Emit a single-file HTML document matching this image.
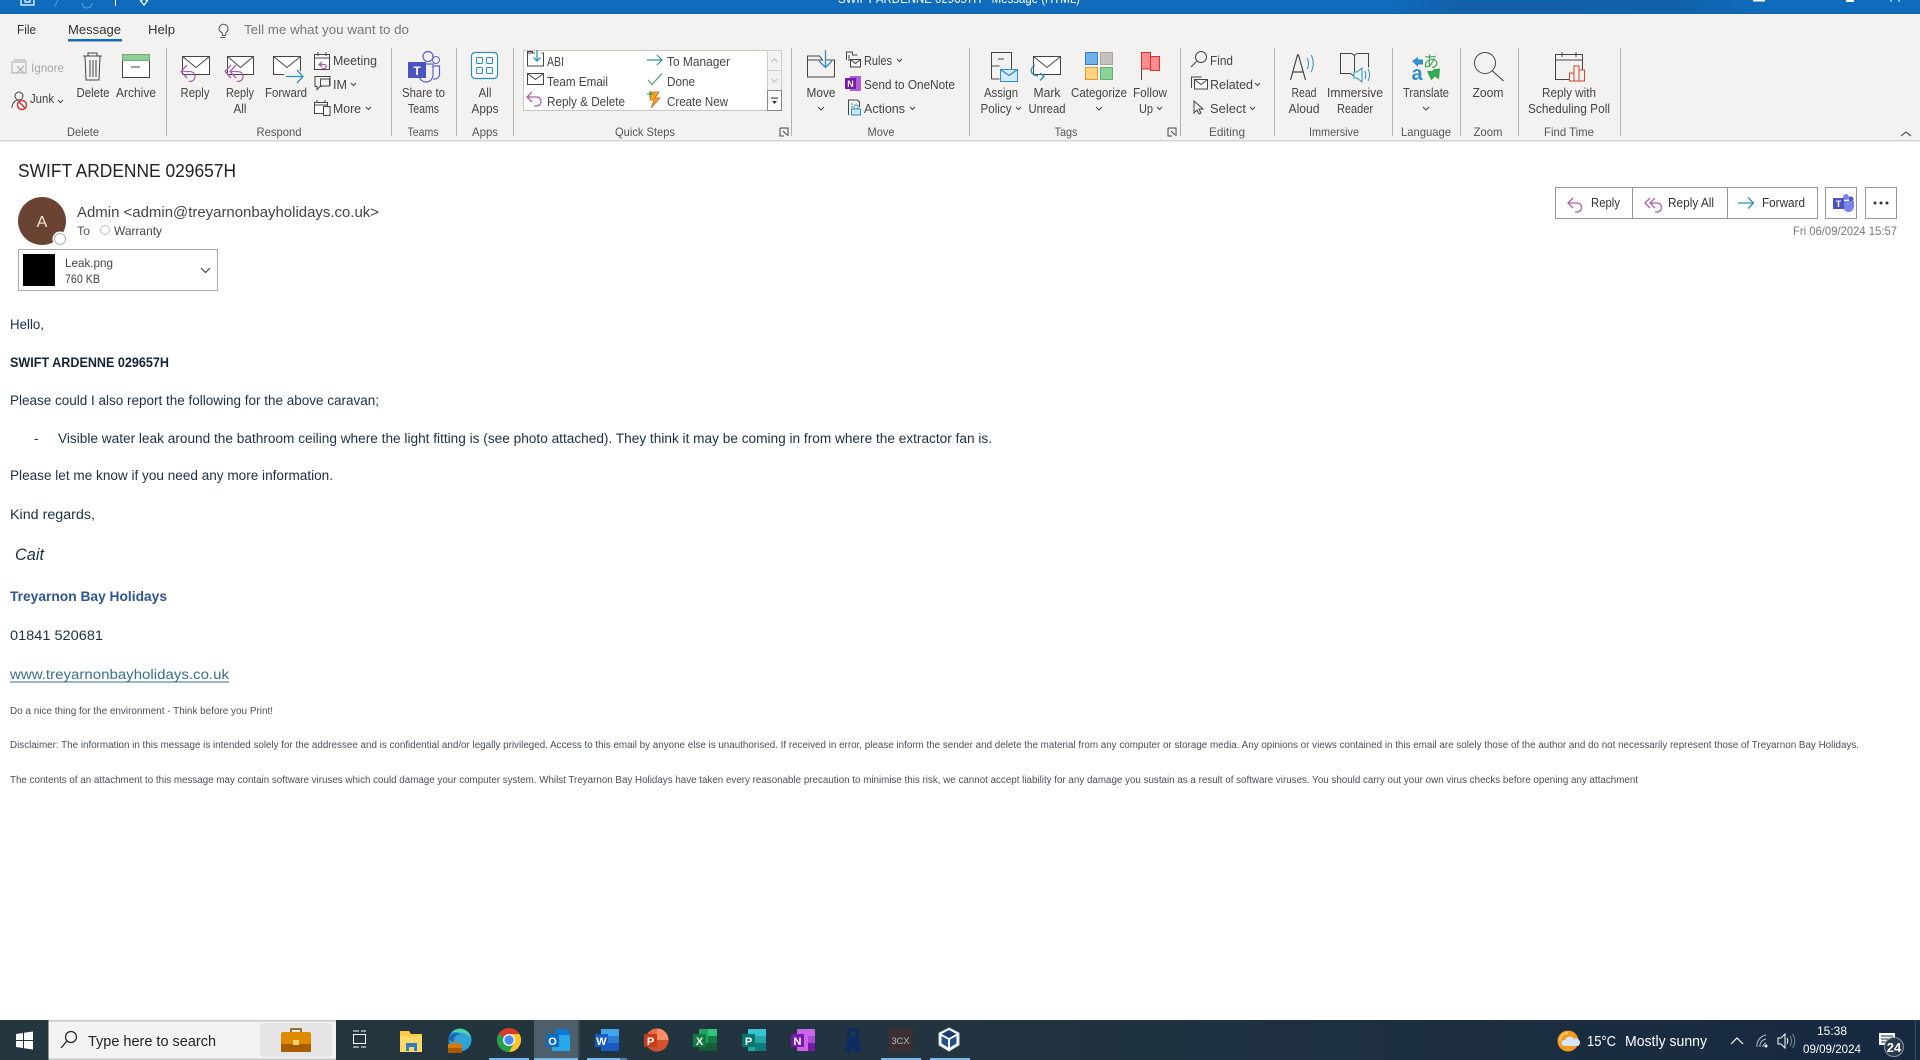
<!DOCTYPE html>
<html><head><meta charset="utf-8"><title>SWIFT ARDENNE 029657H - Message (HTML)</title>
<style>
html,body{margin:0;padding:0;background:#fff;width:1920px;height:1060px;overflow:hidden}
svg{display:block;position:absolute;left:0;top:0}
text{font-family:"Liberation Sans","Noto Sans CJK JP",sans-serif}
.r{font-size:12.5px;fill:#444}
.m{font-size:12.5px;fill:#444;text-anchor:middle}
.g{font-size:12px;fill:#555;text-anchor:middle}
.b{font-size:13.5px;fill:#1c3044}
.s{font-size:10px;fill:#4a4f55}
.i{fill:none;stroke:#444;stroke-width:1}
.w{fill:#fff;stroke:#444;stroke-width:1}
.p{fill:none;stroke:#ad5fad;stroke-width:1.3}
.u{fill:none;stroke:#2f8fc0;stroke-width:1.3}
.ch{fill:none;stroke:#444;stroke-width:1}
.t{font-size:13px;fill:#333}
</style></head><body>
<svg width="1920" height="1060" viewBox="0 0 1920 1060" xmlns="http://www.w3.org/2000/svg">
<defs>
<linearGradient id="tb" x1="0" x2="1"><stop offset="0" stop-color="#24363f"/><stop offset=".5" stop-color="#21343f"/><stop offset="1" stop-color="#172941"/></linearGradient>
<linearGradient id="tl" x1="0" x2="1"><stop offset="0" stop-color="#0f6cbd"/><stop offset=".72" stop-color="#0f6cbd"/><stop offset=".76" stop-color="#1261a8"/><stop offset=".87" stop-color="#1161a8"/><stop offset=".92" stop-color="#0f6cbd"/></linearGradient>
</defs>
<!-- title bar -->
<rect width="1920" height="14" fill="url(#tl)"/>
<rect y="12.5" width="1920" height="1.5" fill="#1062a9"/>
<path d="M21 0v5h13V0M25 0v2h5V0" fill="none" stroke="#fff" stroke-width="1.2"/>
<path d="M58 0l-3 6" stroke="#5d9fd6" fill="none"/><path d="M82 3a5 5 0 0 0 10 0" stroke="#5d9fd6" fill="none"/>
<path d="M115.500 0v6" stroke="#fff"/>
<path d="M140 0l4 5 4-5M142 0v1M146 0v1" fill="none" stroke="#fff" stroke-width="1.2"/>
<text x="838" y="3" font-size="12.5" fill="#fff" textLength="242" lengthAdjust="spacingAndGlyphs">SWIFT ARDENNE 029657H  -  Message (HTML)</text>
<rect x="1753" y="0" width="12" height="1.500" fill="#fff"/><rect x="1846" y="0" width="8" height="2" fill="#fff"/><path d="M1891 0v2M1899 0v2" stroke="#fff"/>
<!-- ribbon -->
<rect y="14" width="1920" height="126" fill="#f3f2f1"/>
<rect y="140" width="1920" height="1" fill="#d4d3d2"/><rect y="141" width="1920" height="1" fill="#ecebea"/>
<text x="17" y="34" class="t" textLength="19" lengthAdjust="spacingAndGlyphs">File</text>
<text x="68" y="34" class="t" textLength="53" lengthAdjust="spacingAndGlyphs">Message</text>
<rect x="68" y="39" width="54" height="2.500" fill="#106ebe"/>
<text x="148" y="34" class="t" textLength="27" lengthAdjust="spacingAndGlyphs">Help</text>
<path d="M219 29a4.500 4.500 0 1 1 7 3.500l-.5 3h-3l-.5-3a4.500 4.500 0 0 1-3-3.500zM220.500 37.500h5" fill="none" stroke="#555"/>
<text x="244" y="34" font-size="13" fill="#777" textLength="165" lengthAdjust="spacingAndGlyphs">Tell me what you want to do</text>
<!-- separators -->
<path d="M166.500 48v88M391.500 48v88M456.500 48v88M513.500 48v88M791.500 48v88M969.500 48v88M1180.500 48v88M1274.500 48v88M1392.500 48v88M1460.500 48v88M1518.500 48v88M1620.500 48v88" stroke="#b5b3b1" stroke-width="1"/>
<!-- group labels -->
<text x="83" y="136" class="g" textLength="32" lengthAdjust="spacingAndGlyphs">Delete</text><text x="279" y="136" class="g" textLength="45" lengthAdjust="spacingAndGlyphs">Respond</text><text x="423" y="136" class="g" textLength="31" lengthAdjust="spacingAndGlyphs">Teams</text><text x="485" y="136" class="g" textLength="26" lengthAdjust="spacingAndGlyphs">Apps</text><text x="645" y="136" class="g" textLength="60" lengthAdjust="spacingAndGlyphs">Quick Steps</text><text x="881" y="136" class="g" textLength="27" lengthAdjust="spacingAndGlyphs">Move</text><text x="1066" y="136" class="g" textLength="23" lengthAdjust="spacingAndGlyphs">Tags</text><text x="1227" y="136" class="g" textLength="36" lengthAdjust="spacingAndGlyphs">Editing</text><text x="1334" y="136" class="g" textLength="50" lengthAdjust="spacingAndGlyphs">Immersive</text><text x="1426" y="136" class="g" textLength="50" lengthAdjust="spacingAndGlyphs">Language</text><text x="1488" y="136" class="g" textLength="29" lengthAdjust="spacingAndGlyphs">Zoom</text><text x="1569" y="136" class="g" textLength="50" lengthAdjust="spacingAndGlyphs">Find Time</text>
<path d="M780 128h8v8M780 128v8h4M783 131l4 4" class="ch" stroke-width=".8"/><path d="M1168 128h8v8M1168 128v8h4M1171 131l4 4" class="ch"/>
<path d="M1901 136l5-4 5 4" fill="none" stroke="#555" stroke-width="1.200"/>
<!-- Delete group -->
<g stroke="#aaa" fill="none"><rect x="12" y="62" width="14" height="11"/><path d="M14 60h12M17 66l7 7M24 66l-7 7"/></g>
<text x="31" y="72" font-size="12" fill="#a8a8a8" textLength="33" lengthAdjust="spacingAndGlyphs">Ignore</text>
<circle cx="19" cy="96" r="4" class="i"/><path d="M12 108c0-5 3-8 7-8" class="i"/><circle cx="22" cy="105" r="4.500" fill="#fff" stroke="#d13438" stroke-width="1.500"/><path d="M19 102l6 6" stroke="#d13438" stroke-width="1.500"/>
<text x="30" y="103" class="r" textLength="24" lengthAdjust="spacingAndGlyphs">Junk</text><path d="M58 100l2.500 2.500 2.500-2.500" class="ch"/>
<path d="M83 56h19M88 56v-3h9v3M85 56l1 24h13l1-24M90 60v17M93 60v17M96 60v17" class="i"/>
<text x="93" y="97" class="m" textLength="33" lengthAdjust="spacingAndGlyphs">Delete</text>
<rect x="122.500" y="54.500" width="27" height="23" class="w"/><rect x="122.500" y="54.500" width="27" height="6" fill="#8fcc98" stroke="#6fae7a"/><path d="M131 67h9" stroke="#444"/>
<text x="136" y="97" class="m" textLength="40" lengthAdjust="spacingAndGlyphs">Archive</text>
<!-- Respond -->
<g><rect x="182.500" y="56.500" width="27" height="18" class="w"/><path d="M182.500 56.500l13.500 11 13.500-11" class="i"/><path d="M187 65l-6 6.500 6 6.500M181 71.500h8c4 0 6 2 6 5s-2 5-6 5" class="p"/></g>
<text x="195" y="97" class="m" textLength="29" lengthAdjust="spacingAndGlyphs">Reply</text>
<g><rect x="227.500" y="56.500" width="26" height="18" class="w"/><path d="M227.500 56.500l13 11 13-11" class="i"/><path d="M231 65l-6 6.500 6 6.500M236 65l-6 6.500 6 6.500M231 71.500h6c4 0 6 2 6 5s-2 5-6 5" class="p"/></g>
<text x="240" y="97" class="m" textLength="28" lengthAdjust="spacingAndGlyphs">Reply</text><text x="240" y="113" class="m" textLength="13" lengthAdjust="spacingAndGlyphs">All</text>
<g><rect x="273.500" y="56.500" width="27" height="18" class="w"/><path d="M273.500 56.500l13.500 11 13.500-11" class="i"/><rect x="284" y="71" width="20" height="11" fill="#f3f2f1"/><path d="M286 76.500h17M297 70l6 6.500-6 6.500" class="u"/></g>
<text x="286" y="97" class="m" textLength="42" lengthAdjust="spacingAndGlyphs">Forward</text>
<g><rect x="314.500" y="54.500" width="15" height="15" class="w"/><path d="M314.500 58h15M318 52v4M326 52v4" class="i"/><path d="M322 62l-3 2.500 3 2.500M319 64.500h5c3 0 3 4 0 4h-2" class="p" fill="none"/></g>
<text x="333" y="65" class="r" textLength="44" lengthAdjust="spacingAndGlyphs">Meeting</text>
<g><path d="M319 76.500h11v9h-3M319 76.500h-4v10h2v3l3-3h2" class="i"/><rect x="320.500" y="79" width="9" height="7" fill="#f3f2f1" stroke="#444"/></g>
<text x="333" y="89" class="r" textLength="14" lengthAdjust="spacingAndGlyphs">IM</text><path d="M351 83l2.500 2.500 2.500-2.500" class="ch"/>
<g><rect x="314.500" y="102.500" width="13" height="11" class="w"/><path d="M314.500 105h13M317 100v3M325 100v3" class="i"/><rect x="323.500" y="106.500" width="6.500" height="9" class="w"/></g>
<text x="333" y="113" class="r" textLength="28" lengthAdjust="spacingAndGlyphs">More</text><path d="M366 107l2.500 2.500 2.500-2.500" class="ch"/>
<!-- Teams -->
<circle cx="428" cy="56.500" r="5" fill="#f3f2f1" stroke="#5b62c4" stroke-width="1.200"/><circle cx="436" cy="60" r="3.500" fill="#f3f2f1" stroke="#5b62c4"/>
<path d="M433 66h6.500v8a5 5 0 0 1-6 5" fill="#f3f2f1" stroke="#5b62c4" stroke-width="1.200"/><path d="M419 64h14v11a7 7 0 0 1-14 0z" fill="#f3f2f1" stroke="#5b62c4" stroke-width="1.200"/>
<rect x="408" y="62" width="18" height="16" fill="#4b53bc"/><text x="417" y="75" font-size="12" font-weight="bold" fill="#fff" text-anchor="middle">T</text>
<text x="423.500" y="97" class="m" textLength="43" lengthAdjust="spacingAndGlyphs">Share to</text><text x="423.500" y="113" class="m" textLength="31" lengthAdjust="spacingAndGlyphs">Teams</text>
<!-- Apps -->
<rect x="471.500" y="52.500" width="26" height="26" rx="3.500" fill="#fff" stroke="#2a8dc5" stroke-width="1.200"/>
<g fill="#f3f2f1" stroke="#2a8dc5"><rect x="476.500" y="57.500" width="6" height="6" rx="1"/><rect x="486.500" y="57.500" width="6" height="6" rx="1"/><rect x="476.500" y="67.500" width="6" height="6" rx="1"/><rect x="486.500" y="67.500" width="6" height="6" rx="1"/></g>
<text x="485" y="97" class="m" textLength="13" lengthAdjust="spacingAndGlyphs">All</text><text x="485" y="113" class="m" textLength="27" lengthAdjust="spacingAndGlyphs">Apps</text>
<!-- Quick steps -->
<rect x="523.500" y="50.500" width="244" height="60" fill="#fff" stroke="#c8c6c4"/>
<rect x="767.500" y="50.500" width="14" height="20" fill="#f3f2f1" stroke="#d0cecc"/><rect x="767.500" y="70.500" width="14" height="20" fill="#f3f2f1" stroke="#d0cecc"/><rect x="767.500" y="90.500" width="14" height="20" fill="#fafafa" stroke="#888"/>
<path d="M771.500 62l3-3 3 3M771.500 79l3 3 3-3" fill="none" stroke="#bbb"/><path d="M771 98h7" stroke="#333"/><path d="M772 101h5l-2.500 3z" fill="#333"/>
<path d="M535 53h-7.500v13h16V53h-2M527.500 53v-1.500h5v1.500" class="i"/><path d="M537 50v11M533.500 57.500l3.500 3.500 3.500-3.500" class="u"/>
<text x="547" y="66" class="r" textLength="17" lengthAdjust="spacingAndGlyphs">ABI</text>
<rect x="527.500" y="73.500" width="16" height="11" class="w"/><path d="M527.500 73.500l8 6 8-6" class="i"/>
<text x="547" y="86" class="r" textLength="61" lengthAdjust="spacingAndGlyphs">Team Email</text>
<path d="M532 92l-5 5 5 5M527 97h10c5 0 6 9-1 9h-2" class="p"/>
<text x="547" y="106" class="r" textLength="78" lengthAdjust="spacingAndGlyphs">Reply &amp; Delete</text>
<path d="M647 60h15M657 55l5 5-5 5" fill="none" stroke="#2f8fa0" stroke-width="1.200"/>
<text x="667" y="66" class="r" textLength="63" lengthAdjust="spacingAndGlyphs">To Manager</text>
<path d="M648 80l4 4.500 10-11" fill="none" stroke="#4a9c6a" stroke-width="1.200"/>
<text x="667" y="86" class="r" textLength="28" lengthAdjust="spacingAndGlyphs">Done</text>
<path d="M650 92h9l-4 6h5l-9 10 3-8h-4z" fill="#f5a623" stroke="#c8651b" stroke-width=".8"/><path d="M647 94h6M650 91v6" stroke="#2e8b3f"/>
<text x="667" y="106" class="r" textLength="61" lengthAdjust="spacingAndGlyphs">Create New</text>
<!-- Move -->
<path d="M807.500 60v17h27V60h-8M807.500 60v-4h12l3 4h-15z" class="i" fill="#fff"/><path d="M825.500 50v17M819 61l6.500 6.500L832 61" class="u"/>
<text x="821" y="97" class="m" textLength="29" lengthAdjust="spacingAndGlyphs">Move</text><path d="M818 107l3 3 3-3" class="ch"/>
<path d="M846.500 60v-8h6v3h5M849 55v6M850.500 59.500h10v7.500h-10zM850.500 59.500l5 4 5-4" class="i"/><text x="864" y="65" class="r" textLength="28" lengthAdjust="spacingAndGlyphs">Rules</text><path d="M897 59l2.500 2.500 2.500-2.500" class="ch"/>
<rect x="850" y="76" width="11" height="15" fill="#b05fd1"/><rect x="845" y="78" width="11" height="11" fill="#7719aa"/><text x="850.500" y="87" font-size="9" font-weight="bold" fill="#fff" text-anchor="middle">N</text>
<text x="864" y="89" class="r" textLength="91" lengthAdjust="spacingAndGlyphs">Send to OneNote</text>
<path d="M848.500 115v-15h9l2 2v5" class="i"/><path d="M851 104h2M851 107h2" stroke="#2f8fc0"/><rect x="851.500" y="109" width="9" height="6" fill="#cde4f5" stroke="#2f8fc0"/><circle cx="856" cy="107" r="2" fill="#fff" stroke="#2f8fc0"/>
<text x="864" y="113" class="r" textLength="41" lengthAdjust="spacingAndGlyphs">Actions</text><path d="M910 107l2.500 2.500 2.500-2.500" class="ch"/>
<!-- Tags -->
<path d="M991.500 79V52.500h20V69M991.500 66h8M991.500 79h8M998 59h6" class="i"/><rect x="1000.500" y="69.500" width="17" height="12" fill="#d4e9f7" stroke="#2f8fc0"/><path d="M1000.500 69.500l8.500 6 8.500-6" class="u" stroke-width="1"/>
<text x="1001" y="97" class="m" textLength="34" lengthAdjust="spacingAndGlyphs">Assign</text><text x="996" y="113" class="m" textLength="31" lengthAdjust="spacingAndGlyphs">Policy</text><path d="M1016 107l2.500 2.500 2.500-2.500" class="ch"/>
<rect x="1033.500" y="56.500" width="27" height="18" class="w"/><path d="M1033.500 56.500l13.500 11 13.500-11" class="i"/><path d="M1035 65c-6 4-5 10 3 11M1040 73l4 3.500-4 4" class="u" fill="#f3f2f1"/>
<text x="1047" y="97" class="m" textLength="27" lengthAdjust="spacingAndGlyphs">Mark</text><text x="1047" y="113" class="m" textLength="37" lengthAdjust="spacingAndGlyphs">Unread</text>
<rect x="1085.500" y="52.500" width="12" height="12" fill="#6fb1e8" stroke="#2b7cd3"/><rect x="1100.500" y="52.500" width="12" height="12" fill="#c4c1bd" stroke="#a8a5a1"/><rect x="1085.500" y="67.500" width="12" height="12" fill="#ffd37f" stroke="#e09a2c"/><rect x="1100.500" y="67.500" width="12" height="12" fill="#8bd29a" stroke="#5fae72"/>
<text x="1099" y="97" class="m" textLength="56" lengthAdjust="spacingAndGlyphs">Categorize</text><path d="M1096 107l3 3 3-3" class="ch"/>
<path d="M1141.500 52v28" stroke="#444"/><path d="M1141.500 52.500h9v4h9v14h-9v-1.500h-9z" fill="#ff8c8c" stroke="#d13438"/><path d="M1150.500 56.500v12.500" stroke="#d13438"/>
<text x="1150" y="97" class="m" textLength="34" lengthAdjust="spacingAndGlyphs">Follow</text><text x="1146" y="113" class="m" textLength="14" lengthAdjust="spacingAndGlyphs">Up</text><path d="M1157 107l2.500 2.500 2.500-2.500" class="ch"/>
<!-- Editing -->
<circle cx="1201" cy="57" r="5.500" class="i"/><path d="M1197 61l-6 6" stroke="#444"/>
<text x="1210" y="65" class="r" textLength="23" lengthAdjust="spacingAndGlyphs">Find</text>
<path d="M1191.500 88v-11h10" class="i"/><rect x="1194.500" y="79.500" width="13" height="9.500" class="w"/><path d="M1194.500 79.500l6.500 5 6.500-5" class="i"/>
<text x="1210" y="89" class="r" textLength="43" lengthAdjust="spacingAndGlyphs">Related</text><path d="M1255 83l2.500 2.500 2.500-2.500" class="ch"/>
<path d="M1194 101v12l3-3 2 4 2-1-2-4h4z" fill="#f3f2f1" stroke="#444"/>
<text x="1210" y="113" class="r" textLength="36" lengthAdjust="spacingAndGlyphs">Select</text><path d="M1250 107l2.500 2.500 2.500-2.500" class="ch"/>
<!-- Immersive -->
<path d="M1290.500 80l7-25h1l7 25M1293 72h10" fill="none" stroke="#444" stroke-width="1.200"/><path d="M1307 58c2 3 2 8 0 11M1311 55c3 5 3 12 0 17" fill="none" stroke="#2f8fc0"/>
<text x="1304" y="97" class="m" textLength="25" lengthAdjust="spacingAndGlyphs">Read</text><text x="1304" y="113" class="m" textLength="31" lengthAdjust="spacingAndGlyphs">Aloud</text>
<path d="M1340.500 53.500h10c3 0 4 2 4 3v20l-4-3h-10zM1354.500 56.500c0-2 2-3 4-3h10v14" class="i" fill="#f3f2f1"/>
<path d="M1354 72h3l5-4v14l-5-4h-3z" fill="#e6f1f8" stroke="#2f8fc0"/><path d="M1365 71c1 2 1 6 0 8M1368 69c2 3 2 9 0 12" fill="none" stroke="#2f8fc0"/>
<text x="1355" y="97" class="m" textLength="56" lengthAdjust="spacingAndGlyphs">Immersive</text><text x="1355" y="113" class="m" textLength="36" lengthAdjust="spacingAndGlyphs">Reader</text>
<!-- Translate -->
<text x="1431" y="67" font-size="16" fill="#3ea55a" text-anchor="middle">あ</text>
<text x="1417" y="80" font-size="20" font-weight="bold" fill="#2d8fd0" text-anchor="middle">a</text>
<path d="M1412 61l6-4v2.500h5v5h-5V67z" fill="#2d8fd0"/><path d="M1427 71h5l3-2.500V69l5-.5-1 11-4-3-3 3-1 .5z" fill="#34a853"/>
<text x="1426" y="97" class="m" textLength="46" lengthAdjust="spacingAndGlyphs">Translate</text><path d="M1423 107l3 3 3-3" class="ch"/>
<!-- Zoom -->
<circle cx="1485" cy="63" r="10.500" class="i" stroke-width="1.100"/><path d="M1492.500 71l11 10" stroke="#444" stroke-width="1.100"/>
<text x="1488" y="97" class="m" textLength="31" lengthAdjust="spacingAndGlyphs">Zoom</text>
<!-- Poll -->
<path d="M1555.500 54.500h27v25h-27zM1555.500 60h27M1562 52v5M1576 52v5" class="i" fill="#fff"/><path d="M1569.500 81v-8h4.500v-7h5v4h5.500v11zM1574 81v-8M1579 81V70" fill="#f3f2f1" stroke="#d24726"/>
<text x="1569" y="97" class="m" textLength="54" lengthAdjust="spacingAndGlyphs">Reply with</text><text x="1569" y="113" class="m" textLength="82" lengthAdjust="spacingAndGlyphs">Scheduling Poll</text>
<!-- message header -->
<text x="18" y="177" font-size="18" fill="#222" textLength="218" lengthAdjust="spacingAndGlyphs">SWIFT ARDENNE 029657H</text>
<circle cx="42" cy="221" r="24" fill="#6b4332"/><text x="42" y="227" font-size="16" fill="#f2e6df" text-anchor="middle">A</text>
<circle cx="60" cy="239" r="7.500" fill="#fff"/><circle cx="60" cy="239" r="5.500" fill="#fff" stroke="#a9b4be"/>
<text x="77" y="217" font-size="15" fill="#444" textLength="302" lengthAdjust="spacingAndGlyphs">Admin &lt;admin@treyarnonbayholidays.co.uk&gt;</text>
<text x="77" y="235" font-size="12" fill="#555" textLength="13" lengthAdjust="spacingAndGlyphs">To</text>
<circle cx="105" cy="230" r="4.500" fill="#fff" stroke="#b4c0cc"/>
<text x="114" y="235" font-size="12" fill="#444" textLength="48" lengthAdjust="spacingAndGlyphs">Warranty</text>
<rect x="18.500" y="249.500" width="199" height="41" fill="#fff" stroke="#aaa"/><rect x="23" y="254" width="32" height="32" fill="#000"/>
<text x="65" y="267" font-size="12" fill="#444" textLength="48" lengthAdjust="spacingAndGlyphs">Leak.png</text><text x="65" y="283" font-size="12" fill="#444" textLength="35" lengthAdjust="spacingAndGlyphs">760 KB</text>
<path d="M201 268l4.500 4.500 4.500-4.500" fill="none" stroke="#444" stroke-width="1.200"/>
<!-- actions -->
<g fill="#fff" stroke="#969696"><rect x="1555.500" y="187.500" width="262" height="31"/><rect x="1825.500" y="187.500" width="31" height="31"/><rect x="1865.500" y="187.500" width="31" height="31"/></g><path d="M1632.500 187v31M1727.500 187v31" stroke="#969696"/>
<path d="M1573 198l-5 5 5 5M1568 203h9c6 0 6 9 0 9h-2" class="p"/>
<path d="M1650 198l-5 5 5 5M1655 198l-5 5 5 5M1650 203h7c6 0 6 9 0 9h-2" class="p"/>
<path d="M1738 203h15M1748 197.500l5.500 5.500-5.500 5.500" class="u"/>
<text x="1591" y="207" class="t" textLength="29" lengthAdjust="spacingAndGlyphs">Reply</text><text x="1668" y="207" class="t" textLength="46" lengthAdjust="spacingAndGlyphs">Reply All</text><text x="1762" y="207" class="t" textLength="43" lengthAdjust="spacingAndGlyphs">Forward</text>
<circle cx="1846" cy="197" r="3" fill="#7b83eb"/><circle cx="1851" cy="199" r="2.500" fill="#5059c9"/><path d="M1843 201h11v5a5 5 0 0 1-11 1z" fill="#7b83eb"/><rect x="1833" y="198" width="11" height="11" fill="#4b53bc"/><text x="1838.500" y="207" font-size="9" font-weight="bold" fill="#fff" text-anchor="middle">T</text>
<g fill="#333"><circle cx="1875" cy="203" r="1.500"/><circle cx="1881" cy="203" r="1.500"/><circle cx="1887" cy="203" r="1.500"/></g>
<text x="1793" y="235" font-size="12" fill="#777" textLength="104" lengthAdjust="spacingAndGlyphs">Fri 06/09/2024 15:57</text>
<!-- body -->
<text x="10" y="329" class="b" textLength="34" lengthAdjust="spacingAndGlyphs">Hello,</text>
<text x="10" y="367" class="b" font-weight="bold" textLength="159" lengthAdjust="spacingAndGlyphs" style="fill:#132435">SWIFT ARDENNE 029657H</text>
<text x="10" y="405" class="b" textLength="369" lengthAdjust="spacingAndGlyphs">Please could I also report the following for the above caravan;</text>
<text x="34" y="443" class="b">-</text>
<text x="58" y="443" class="b" textLength="934" lengthAdjust="spacingAndGlyphs">Visible water leak around the bathroom ceiling where the light fitting is (see photo attached). They think it may be coming in from where the extractor fan is.</text>
<text x="10" y="480" class="b" textLength="323" lengthAdjust="spacingAndGlyphs">Please let me know if you need any more information.</text>
<text x="10" y="519" class="b" textLength="85" lengthAdjust="spacingAndGlyphs">Kind regards,</text>
<text x="15" y="560" font-size="17" font-style="italic" fill="#1c3044" textLength="29" lengthAdjust="spacingAndGlyphs">Cait</text>
<text x="10" y="601" class="b" font-weight="bold" textLength="157" lengthAdjust="spacingAndGlyphs" style="fill:#2f5496">Treyarnon Bay Holidays</text>
<text x="10" y="640" class="b" textLength="93" lengthAdjust="spacingAndGlyphs">01841 520681</text>
<text x="10" y="679" class="b" textLength="219" lengthAdjust="spacingAndGlyphs" style="fill:#3a6f8a">www.treyarnonbayholidays.co.uk</text><rect x="10" y="681.500" width="219" height="1" fill="#3a6f8a"/>
<text x="10" y="714" class="s" textLength="263" lengthAdjust="spacingAndGlyphs">Do a nice thing for the environment - Think before you Print!</text>
<text x="10" y="748" class="s" textLength="1849" lengthAdjust="spacingAndGlyphs">Disclaimer: The information in this message is intended solely for the addressee and is confidential and/or legally privileged. Access to this email by anyone else is unauthorised. If received in error, please inform the sender and delete the material from any computer or storage media. Any opinions or views contained in this email are solely those of the author and do not necessarily represent those of Treyarnon Bay Holidays.</text>
<text x="10" y="783" class="s" textLength="1628" lengthAdjust="spacingAndGlyphs">The contents of an attachment to this message may contain software viruses which could damage your computer system. Whilst Treyarnon Bay Holidays have taken every reasonable precaution to minimise this risk, we cannot accept liability for any damage you sustain as a result of software viruses. You should carry out your own virus checks before opening any attachment</text>
<!-- taskbar -->
<rect y="1020" width="1920" height="40" fill="url(#tb)"/>
<g fill="#fff"><path d="M16 1034l7-1v7h-7zM24 1032.800l9-1.300v8.500h-9zM16 1041h7v7l-7-1zM24 1041h9v8.500l-9-1.300z"/></g>
<rect x="48.500" y="1020" width="287.500" height="40" fill="#f3f3f3"/><rect x="48.500" y="1020" width="287.500" height="1.500" fill="#c8c8c8"/><rect x="48.500" y="1058.500" width="287.500" height="1.500" fill="#c8c8c8"/>
<circle cx="71" cy="1037" r="5.500" fill="none" stroke="#222" stroke-width="1.200"/><path d="M67 1041l-6 7" stroke="#222" stroke-width="1.300"/>
<text x="88" y="1046" font-size="15" fill="#222" textLength="128" lengthAdjust="spacingAndGlyphs">Type here to search</text>
<rect x="260" y="1023" width="72" height="34" rx="4" fill="#e6e6e6"/>
<path d="M291 1032v-3h10v3" fill="none" stroke="#8a4a00" stroke-width="1.500"/><rect x="281" y="1032" width="30" height="20" rx="2" fill="#e08a00"/><rect x="281" y="1044" width="30" height="8" rx="1" fill="#a85d00"/><rect x="293" y="1040" width="6" height="5" fill="#ffd36b"/>
<g fill="none" stroke="#fff"><rect x="353.500" y="1034.500" width="12" height="9"/><path d="M353 1031h6M361 1031h5M353 1047h6M361 1047h5"/></g>
<path d="M400 1031h9l2 3h11v18h-22z" fill="#ffc83d"/><rect x="400" y="1036" width="22" height="16" fill="#ffd866"/><path d="M406 1051v-8h11v8h-3v-4h-5v4z" fill="#2f7fc8"/>
<!-- edge -->
<circle cx="460" cy="1040" r="11.500" fill="#2fa2d8"/><path d="M452 1032a11.500 11.500 0 0 1 19 6c-5-6-13-6-19-6z" fill="#4fd8a0"/><path d="M449 1040c-1-5 6-9 11-6-5 1-7 5-6 9z" fill="#1766b5"/>
<rect x="448" y="1044" width="14" height="9" fill="#d47a0c"/><rect x="448" y="1048" width="14" height="5" fill="#a85a00"/><rect x="453" y="1042" width="4" height="2" fill="none" stroke="#d47a0c"/>
<!-- chrome -->
<circle cx="509" cy="1040" r="12" fill="#dc3b2c"/><path d="M498.600 1034A12 12 0 0 0 509 1052L514.200 1043 503.800 1037z" fill="#28a24a"/><path d="M519.400 1034A12 12 0 0 1 509 1052L514.200 1043 509 1034z" fill="#fcc62c"/><circle cx="509" cy="1040" r="6" fill="#fff"/><circle cx="509" cy="1040" r="4.700" fill="#4b8bf0"/>
<!-- outlook -->
<rect x="534" y="1020" width="44" height="38" fill="#4c5f6a"/>
<rect x="555" y="1029" width="14" height="10" fill="#0f78d4"/><rect x="552" y="1035" width="18" height="16" fill="#28a8ea"/><rect x="546" y="1034" width="13" height="13" fill="#0f6cbd"/><text x="552.500" y="1045" font-size="11" font-weight="bold" fill="#fff" text-anchor="middle">O</text>
<!-- word -->
<rect x="601" y="1029" width="18" height="22" rx="1" fill="#2b7cd3"/><rect x="601" y="1029" width="18" height="7" fill="#41a5ee"/><rect x="601" y="1043" width="18" height="8" fill="#185abd"/><rect x="595" y="1034" width="13" height="13" fill="#185abd"/><text x="601.500" y="1045" font-size="11" font-weight="bold" fill="#fff" text-anchor="middle">W</text>
<!-- ppt -->
<circle cx="657" cy="1040" r="11.500" fill="#ed6c47"/><path d="M657 1028.500a11.500 11.500 0 0 1 11.500 11.500h-11.500z" fill="#ff8f6b"/><path d="M645.500 1040a11.500 11.500 0 0 0 23 0z" fill="#d35230"/><rect x="644" y="1034" width="13" height="13" fill="#c43e1c"/><text x="650.500" y="1045" font-size="11" font-weight="bold" fill="#fff" text-anchor="middle">P</text>
<!-- excel -->
<rect x="699" y="1029" width="18" height="22" fill="#21a366"/><rect x="708" y="1029" width="9" height="7" fill="#33c481"/><rect x="708" y="1036" width="9" height="7" fill="#107c41"/><rect x="699" y="1043" width="18" height="8" fill="#185c37"/><rect x="693" y="1034" width="13" height="13" fill="#107c41"/><text x="699.500" y="1045" font-size="11" font-weight="bold" fill="#fff" text-anchor="middle">X</text>
<!-- publisher -->
<rect x="748" y="1029" width="18" height="22" rx="1" fill="#20a8a8"/><rect x="748" y="1029" width="18" height="7" fill="#37c6d0"/><rect x="755" y="1043" width="11" height="8" fill="#107a7a"/><rect x="742" y="1034" width="13" height="13" fill="#077568"/><text x="748.500" y="1045" font-size="11" font-weight="bold" fill="#fff" text-anchor="middle">P</text>
<!-- onenote -->
<rect x="797" y="1029" width="18" height="22" rx="1" fill="#ca64ea"/><rect x="808" y="1036" width="7" height="7" fill="#ae4bd5"/><rect x="808" y="1043" width="7" height="8" fill="#7719aa"/><rect x="791" y="1034" width="13" height="13" fill="#7719aa"/><text x="797.500" y="1045" font-size="11" font-weight="bold" fill="#fff" text-anchor="middle">N</text>
<!-- blue figure -->
<circle cx="853" cy="1034" r="4.500" fill="none" stroke="#0b2c66" stroke-width="3"/><path d="M849 1039l-3 13M857 1039l3 13M849 1039l9 13M857 1039l-9 13" stroke="#0b2c66" stroke-width="3" fill="none"/>
<!-- 3CX -->
<rect x="888" y="1028" width="25" height="24" fill="#3a3033"/><text x="900.500" y="1044" font-size="9" fill="#b8b8b8" text-anchor="middle" textLength="18" lengthAdjust="spacingAndGlyphs">3CX</text>
<!-- vbox -->
<path d="M949 1028l10 5v12l-10 6-10-6v-12z" fill="#fff" stroke="#cdd8ea"/><path d="M941.500 1034l7.500-4 7.500 4-7.500 4z" fill="#1b3c6f"/><path d="M941.500 1036l6.500 3.500v8l-6.500-4zM956.500 1036l-6.500 3.500v8l6.500-4z" fill="#21508f"/>
<g fill="#76b9ed"><rect x="489" y="1058" width="40" height="2"/><rect x="534" y="1058" width="44" height="2"/><rect x="587" y="1058" width="33" height="2"/><rect x="620" y="1058" width="7" height="2" fill="#4a7fa5"/><rect x="881" y="1058" width="40" height="2"/><rect x="930" y="1058" width="40" height="2"/></g>
<rect x="578" y="1020" width="2" height="38" fill="#34464f"/>
<!-- tray -->
<circle cx="1568" cy="1041" r="10.500" fill="#f49a1f"/><path d="M1560 1041a8 8 0 0 1 8-8" stroke="#ffc56b" stroke-width="2" fill="none"/>
<path d="M1564 1046a3 3 0 0 1 1-6 5 5 0 0 1 9-1 3.500 3.500 0 0 1 4 7z" fill="#d6e6f5"/>
<text x="1587" y="1046" font-size="15" fill="#fff" textLength="29" lengthAdjust="spacingAndGlyphs">15°C</text>
<text x="1625" y="1046" font-size="15" fill="#fff" textLength="82" lengthAdjust="spacingAndGlyphs">Mostly sunny</text>
<path d="M1731 1044l6-6 6 6" fill="none" stroke="#fff" stroke-width="1.200"/>
<path d="M1757 1047a11 11 0 0 1 9-12M1760 1047a7 7 0 0 1 6-8M1763 1047a3.500 3.500 0 0 1 3-4" fill="none" stroke="#bfc6cf"/><circle cx="1766" cy="1046" r="1.500" fill="#fff"/>
<path d="M1778 1038h3l4-4v14l-4-4h-3z" fill="none" stroke="#fff"/><path d="M1787 1038c1 2 1 4 0 6" fill="none" stroke="#fff"/><path d="M1790 1036c2 3 2 7 0 10M1792.500 1034c3 4 3 10 0 14" fill="none" stroke="#7b8696"/>
<text x="1832" y="1035" font-size="12" fill="#fff" text-anchor="middle">15:38</text>
<text x="1832" y="1053" font-size="12" fill="#fff" text-anchor="middle" textLength="58" lengthAdjust="spacingAndGlyphs">09/09/2024</text>
<path d="M1879 1033h16v12h-16z" fill="#fff"/><path d="M1881 1036h12M1881 1039h12M1881 1042h8" stroke="#172941"/>
<circle cx="1894" cy="1047" r="9.500" fill="#2a3a4d" stroke="#8a94a0" stroke-width="1"/><text x="1894" y="1052" font-size="13" font-weight="bold" fill="#fff" text-anchor="middle">24</text>
<rect x="1915" y="1020" width="1" height="40" fill="#3a4a5c"/>
</svg>
</body></html>
